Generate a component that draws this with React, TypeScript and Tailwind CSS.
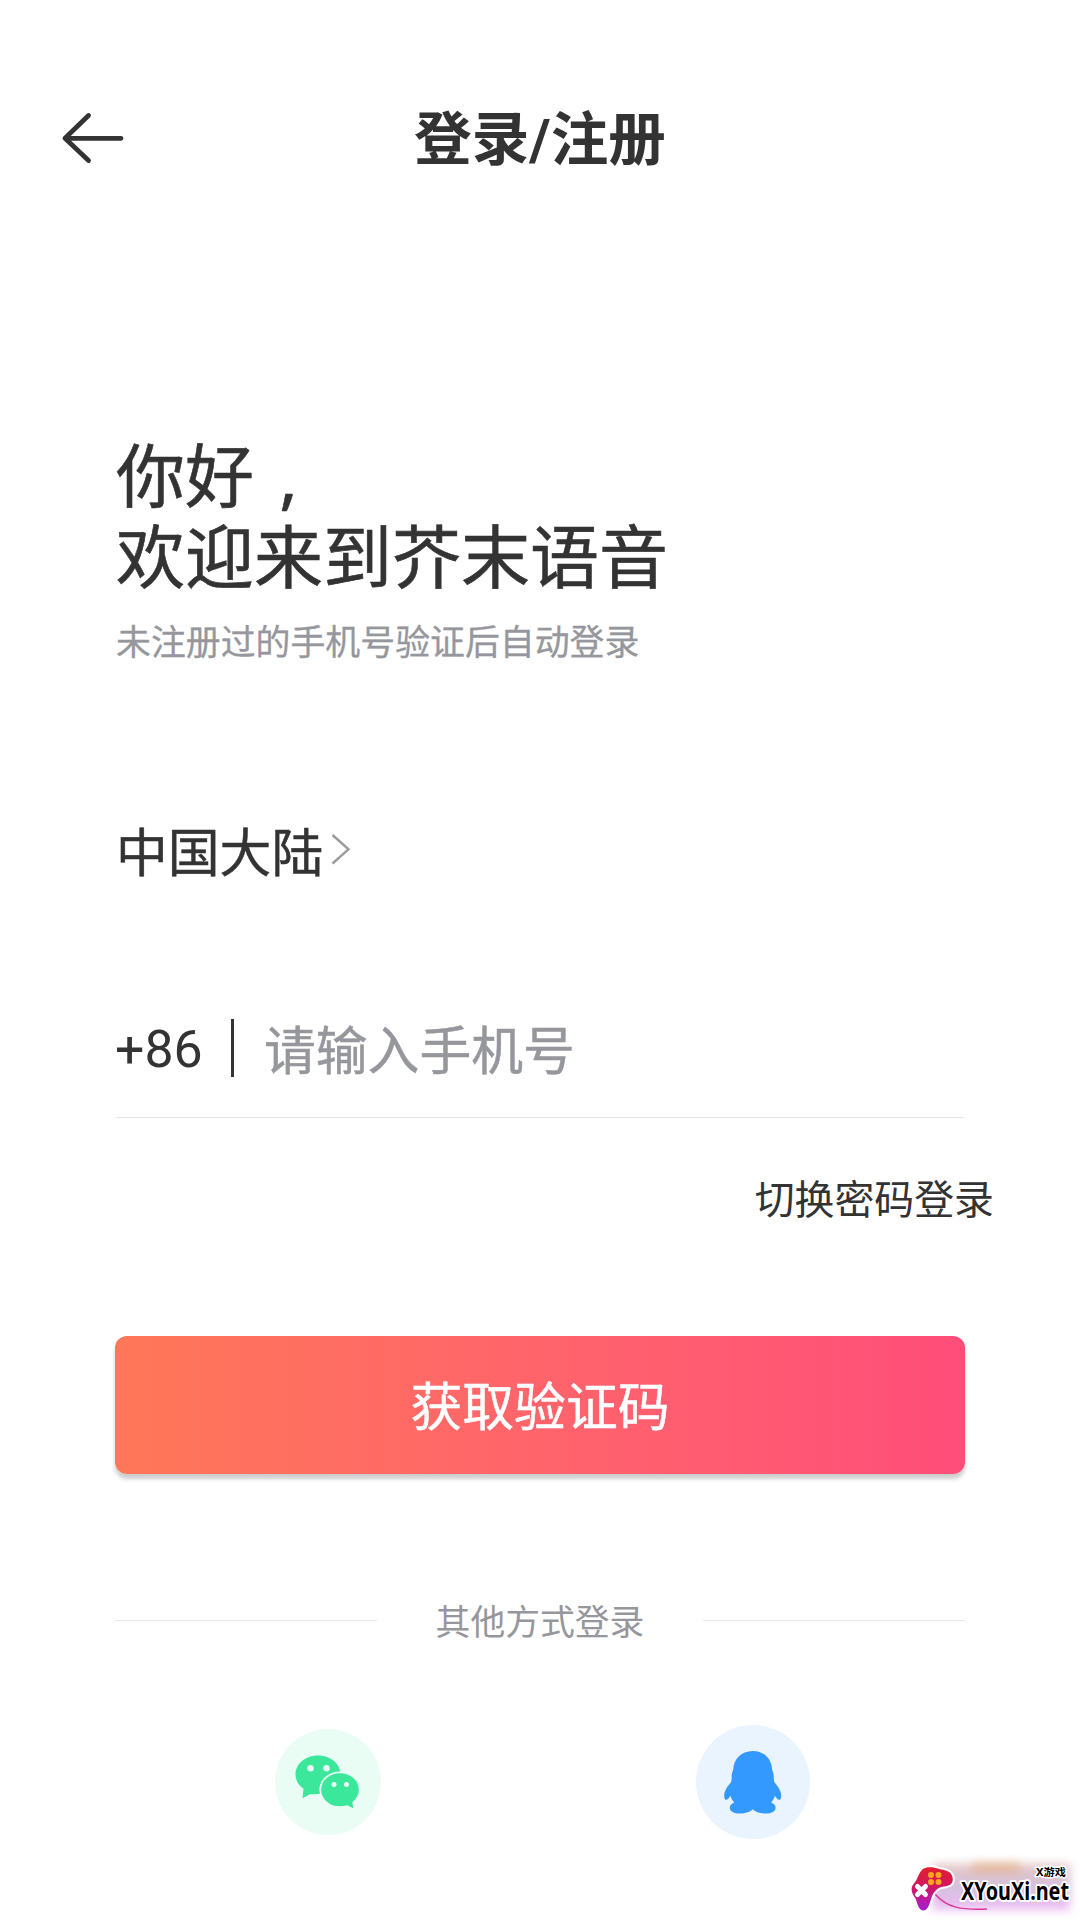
import { useState } from "react";

const BackIcon = () => (
  <svg width="64" height="52" viewBox="0 0 64 52" fill="none">
    <path
      d="M27.5 3.5 4 26.3 27.5 48.5M4 26.3H60"
      stroke="#333333"
      strokeWidth="4.8"
      strokeLinecap="round"
      strokeLinejoin="round"
    />
  </svg>
);

const ChevronIcon = () => (
  <svg width="20" height="32" viewBox="0 0 20 32" fill="none">
    <path d="M1.5 2 17.5 16.3 1.5 30.5" stroke="#9b9b9b" strokeWidth="2.4" />
  </svg>
);

const WechatIcon = () => (
  <svg width="106" height="106" viewBox="0 0 106 106">
    <circle cx="53" cy="53" r="53" fill="#e9fdf4" />
    <path
      d="M43 26.5C30.5 26.5 20.5 34.8 20.5 45.3c0 6 3 11 8 14.5l-1 9.4 8-4.3c2.6.8 5 .1 7.5.1C55.5 65 65.5 56 65.5 45.3 65.5 34.8 55.5 26.5 43 26.5Z"
      fill="#3ae79b"
    />
    <path
      d="M65 43.3c11 0 19.7 7.8 19.7 17.5 0 5.2-2.7 9.6-6.4 12.7l.9 7.2-7-3.6c-2.4.8-4.6 1.1-7.2 1.1-11 0-19.7-7.8-19.7-17.4 0-9.7 8.7-17.5 19.7-17.5Z"
      fill="#3ae79b"
      stroke="#e9fdf4"
      strokeWidth="1.8"
    />
    <g fill="#e9fdf4">
      <circle cx="35.5" cy="39.2" r="3.2" />
      <circle cx="51.5" cy="39.2" r="3.2" />
      <circle cx="59" cy="55.5" r="2.5" />
      <circle cx="71.5" cy="55.5" r="2.5" />
    </g>
  </svg>
);

const QQIcon = () => (
  <svg width="114" height="114" viewBox="0 0 114 114">
    <circle cx="57" cy="57" r="57" fill="#e9f4ff" />
    <path
      d="M56.7 26C45 26 37.5 34.5 37.2 45c-1.2 2.5-1.7 5-1.5 8-.2 2-.4 3.500-.9 4.500-3.300 3.700-6.600 8.500-6.600 13 0 2.500.6 4.300 1.700 4.500 1.500 0 3.300-2 4.600-4.200.7 3.200 2.100 4.700 3.800 6.700-3 1-4.500 3-4.500 5.200 0 3.600 4.300 5.800 10.200 5.800 5.600 0 10.300-1.800 12.700-4.300 2.400 2.500 7.100 4.300 12.700 4.300 5.900 0 10.200-2.200 10.200-5.800 0-2.200-1.500-4.200-4.500-5.200 1.700-2 3.100-3.500 3.800-6.700 1.300 2.200 3.100 4.200 4.600 4.200 1.100-.2 1.700-2 1.700-4.500 0-4.500-3.300-9.300-6.600-13-.5-1-.7-2.500-.9-4.500.2-3-.3-5.500-1.500-8C75.900 34.500 68.400 26 56.7 26Z"
      fill="#3399ff"
    />
  </svg>
);

const Watermark = () => (
  <div className="absolute right-0 bottom-0 h-[70px] w-[190px] overflow-hidden">
    <div className="absolute top-[14px] left-[42px] h-[46px] w-[138px] bg-linear-to-b from-[#dfb7b4] via-[#c9b3d6] to-[#eaa8f2] opacity-80 blur-[5px]" />
    <div className="absolute top-[13px] left-[82px] h-[9px] w-[48px] bg-[#e0a05c] opacity-50 blur-[5px]" />
    <svg className="absolute inset-0" width="190" height="70" viewBox="0 0 190 70">
      <defs>
        <linearGradient id="pad" x1="0" y1="0" x2="0" y2="1">
          <stop offset="0" stopColor="#e21f2c" />
          <stop offset=".5" stopColor="#cf1568" />
          <stop offset="1" stopColor="#a51fd8" />
        </linearGradient>
      </defs>
      <path
        d="M45 44c12 14 26 16 52 15"
        fill="none"
        stroke="#d8389c"
        strokeWidth="1.5"
      />
      <path
        d="M34 18.5C38 16.5 44 17 49 19c6 1 12 2 13.5 8 1.5 7-3 9-9 9.5-6 1-10 5-12 11-2 7-4 13-8 13-5 0-6-7-8-12-4-5-5.5-11-1.5-15 4-4 5-13 10-15Z"
        fill="url(#pad)"
        stroke="#ffffff"
        strokeWidth="4"
        paintOrder="stroke"
      />
      <g fill="#ffa51f">
        <circle cx="41" cy="25" r="3" />
        <circle cx="48.5" cy="25" r="3" />
        <circle cx="41" cy="32" r="3" />
        <circle cx="48.5" cy="32" r="3" />
      </g>
      <path
        d="m27.5 36.5 8 8M35.5 36.5l-8 8"
        stroke="#ffffff"
        strokeWidth="5"
        strokeLinecap="round"
      />
      <g
        fill="#000000"
        stroke="#ffffff"
        strokeLinejoin="round"
        paintOrder="stroke"
        fontWeight="700"
      >
        <text
          x="146"
          y="26"
          fontSize="10"
          strokeWidth="3"
          textLength="30"
          lengthAdjust="spacingAndGlyphs"
          className="font-['Noto_Sans','Noto_Sans_CJK_SC',sans-serif]"
        >
          X游戏
        </text>
        <text
          x="71"
          y="50"
          fontSize="24.5"
          strokeWidth="4"
          textLength="108"
          lengthAdjust="spacingAndGlyphs"
          className="font-['Noto_Sans',sans-serif]"
        >
          XYouXi.net
        </text>
      </g>
    </svg>
  </div>
);

const App: React.FC = () => {
  const [phone, setPhone] = useState("");

  return (
    <div className="relative flex h-[1920px] w-[1080px] flex-col overflow-hidden bg-white font-['Noto_Sans_CJK_SC',sans-serif] text-[#333333]">
      <header className="mt-[89px] grid h-[92px] grid-cols-[1fr_auto_1fr] items-center pl-[61px]">
        <button
          type="button"
          aria-label="返回"
          className="mt-1.5 justify-self-start"
        >
          <BackIcon />
        </button>
        <h1 className="-ml-[61px] text-[57.6px] leading-[92px] font-bold">
          登录<span className="font-[Roboto,sans-serif] leading-none">/</span>
          注册
        </h1>
      </header>

      <main className="flex flex-col px-[115px]">
        <h2 className="mt-[251px] ml-px text-[69px] leading-[81px] [-webkit-text-stroke:0.6px_#333333]">
          你好
          <span className="inline-block w-[69px] text-center font-['Noto_Sans',sans-serif] leading-none">
            ,
          </span>
          <br />
          欢迎来到芥末语音
        </h2>
        <p className="mt-[21px] ml-px text-[34.9px] leading-[50px] text-[#96979c] [-webkit-text-stroke:0.3px_#96979c]">
          未注册过的手机号验证后自动登录
        </p>

        <button
          type="button"
          className="mt-[146px] ml-px flex h-[76px] items-center gap-[8px] text-[51.8px] leading-[75px] [-webkit-text-stroke:0.5px_#333333]"
        >
          中国大陆
          <ChevronIcon />
        </button>

        <div className="mt-[113px] flex h-[118px] items-center border-b border-[#e8e8e8] pb-[22px] text-[51.8px]">
          <span className="w-[116px] pt-1 font-[Roboto,sans-serif] leading-[76px]">
            +86
          </span>
          <span className="h-[58px] w-[3px] bg-[#333333]" />
          <input
            type="tel"
            value={phone}
            onChange={(e) => setPhone(e.target.value)}
            placeholder="请输入手机号"
            className="ml-[30px] h-[76px] flex-1 outline-none [-webkit-text-stroke:0.5px_#96979c] placeholder:text-[#96979c]"
          />
        </div>

        <button
          type="button"
          className="mt-[49px] -mr-[29px] self-end text-[39.9px] leading-[60px]"
        >
          切换密码登录
        </button>

        <button
          type="button"
          className="mt-[109px] h-[138px] rounded-xl bg-linear-to-r from-[#ff7758] to-[#ff4d7a] text-[51.8px] leading-[138px] text-white shadow-[0_5px_4px_rgba(0,0,0,0.2)] [-webkit-text-stroke:0.5px_#ffffff]"
        >
          <span className="block pb-[3px] leading-[135px]">获取验证码</span>
        </button>

        <div className="mt-[121px] flex h-[50px] items-center justify-between text-[34.8px] leading-[50px] text-[#96979c]">
          <span className="h-px w-[262px] bg-[#e8e8e8]" />
          其他方式登录
          <span className="h-px w-[262px] bg-[#e8e8e8]" />
        </div>

        <div className="mt-[80px] grid h-[114px] grid-cols-2 place-items-center">
          <button type="button" aria-label="微信登录">
            <WechatIcon />
          </button>
          <button type="button" aria-label="QQ登录">
            <QQIcon />
          </button>
        </div>
      </main>

      <Watermark />
    </div>
  );
};

export default App;
